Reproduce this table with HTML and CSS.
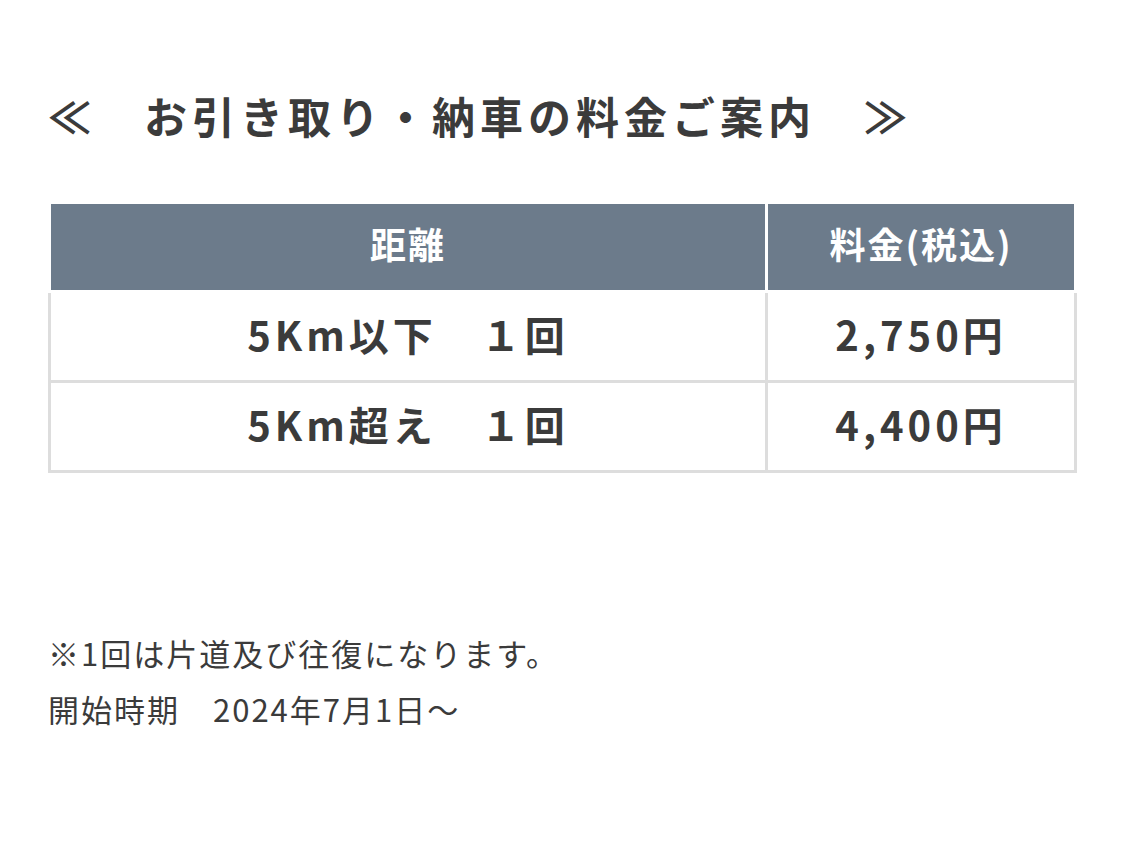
FILE: index.html
```html
<!DOCTYPE html>
<html lang="ja">
<head>
<meta charset="utf-8">
<link rel="stylesheet" href="styles.css">
</head>
<body>
<main class="page">
  <h2 class="title">≪　お引き取り・納車の料金ご案内　≫</h2>
  <table class="fee">
    <thead>
      <tr><th class="col-dist">距離</th><th class="col-fee">料金(税込)</th></tr>
    </thead>
    <tbody>
      <tr><td>5Km以下　１回</td><td>2,750円</td></tr>
      <tr><td>5Km超え　１回</td><td>4,400円</td></tr>
    </tbody>
  </table>
  <div class="notes">
    <p>※1回は片道及び往復になります。</p>
    <p>開始時期　2024年7月1日～</p>
  </div>
</main>
</body>
</html>
```
FILE: styles.css
```css
html, body {
  margin: 0;
  background: #fff;
}
body {
  font-family: "Noto Sans CJK JP", "Noto Sans", sans-serif;
  color: #3b3b3b;
}
.page {
  padding: 85px 48px 0 48px;
}
.title {
  margin: 0;
  font-size: 43px;
  font-weight: 700;
  letter-spacing: 5px;
  line-height: 60px;
}
.fee {
  margin-top: 56px;
  width: 1029px;
  border-collapse: collapse;
  table-layout: fixed;
}
.fee th {
  background: #6c7b8b;
  color: #fff;
  border: 3px solid #fff;
  font-size: 36px;
  font-weight: 700;
  letter-spacing: 2px;
  height: 78px;
  padding: 0 0 8px 0;
  text-align: center;
}
.fee th.col-dist { width: 69.6%; }
.fee td {
  border: 3px solid #ddd;
  font-size: 40px;
  font-weight: 700;
  letter-spacing: 4px;
  height: 81px;
  padding: 0 0 6px 0;
  text-align: center;
}
.notes {
  margin-top: 152px;
  font-size: 31px;
  letter-spacing: 2px;
}
.notes p {
  margin: 0;
  line-height: 56px;
}
```
